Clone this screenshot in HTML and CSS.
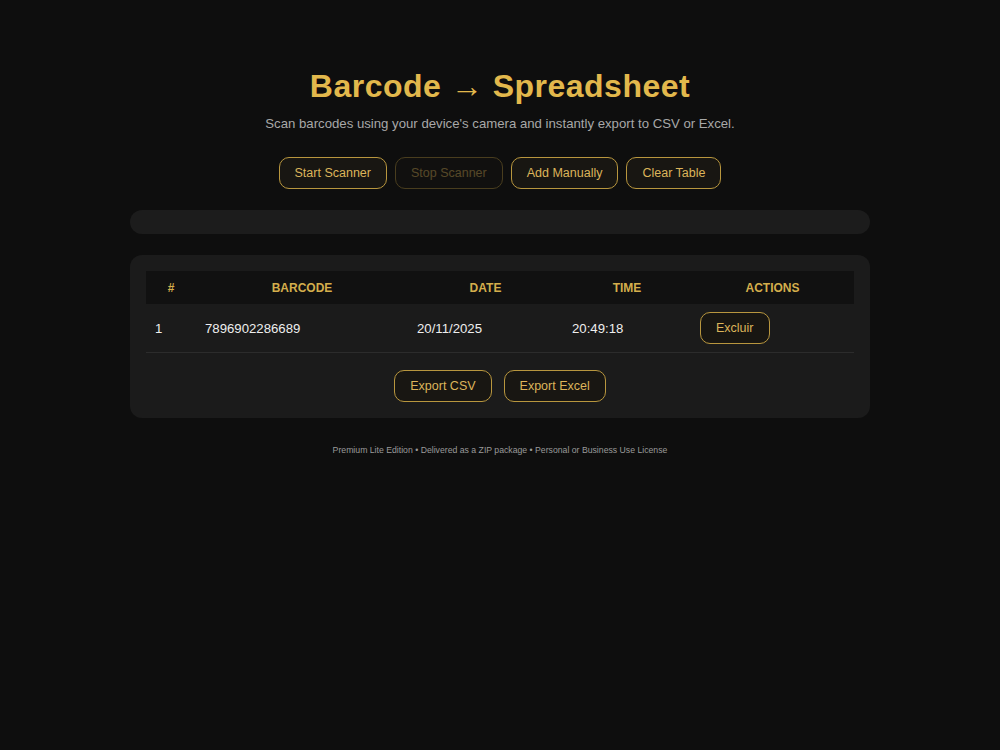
FILE: index.html
```html
<!DOCTYPE html>
<html lang="en">
<head>
    <meta charset="UTF-8">
    <meta name="viewport" content="width=device-width, initial-scale=1.0">
    <title>Barcode → Spreadsheet</title>
    <link rel="stylesheet" href="styles.css">
</head>
<body>
    <div class="wrap">
        <h1>Barcode → Spreadsheet</h1>
        <p class="subtitle">Scan barcodes using your device's camera and instantly export to CSV or Excel.</p>

        <div class="controls">
            <button class="btn">Start Scanner</button>
            <button class="btn" disabled>Stop Scanner</button>
            <button class="btn">Add Manually</button>
            <button class="btn">Clear Table</button>
        </div>

        <div id="reader" class="reader"></div>

        <div class="card">
            <table>
                <thead>
                    <tr>
                        <th class="col-num">#</th>
                        <th class="col-code">Barcode</th>
                        <th class="col-date">Date</th>
                        <th class="col-time">Time</th>
                        <th>Actions</th>
                    </tr>
                </thead>
                <tbody>
                    <tr>
                        <td>1</td>
                        <td>7896902286689</td>
                        <td>20/11/2025</td>
                        <td>20:49:18</td>
                        <td><button class="btn">Excluir</button></td>
                    </tr>
                </tbody>
            </table>

            <div class="export">
                <button class="btn">Export CSV</button>
                <button class="btn">Export Excel</button>
            </div>
        </div>

        <p class="footer">Premium Lite Edition • Delivered as a ZIP package • Personal or Business Use License</p>
    </div>
</body>
</html>
```

FILE: styles.css
```css
body {
    margin: 0;
    background-color: #0e0e0e;
    color: #eee;
    font-family: "Liberation Sans", Arial, sans-serif;
}
.wrap {
    width: 740px;
    margin: 0 auto;
    padding-top: 68px;
}
h1 {
    margin: 0;
    text-align: center;
    font-size: 32px;
    line-height: 37px;
    letter-spacing: 0.5px;
    color: #e2b84c;
}
.subtitle {
    margin: 11px 0 0;
    text-align: center;
    font-size: 13.2px;
    line-height: 16px;
    color: #a8a8a8;
}
.controls {
    display: flex;
    justify-content: center;
    gap: 8px;
    margin-top: 25px;
}
.btn {
    background-color: #181612;
    border: 1px solid #b8963e;
    border-radius: 10px;
    color: #dcb45a;
    font-family: "Liberation Sans", Arial, sans-serif;
    font-size: 12.5px;
    height: 32px;
    padding: 0 15px;
    cursor: pointer;
}
.btn:disabled {
    opacity: 0.35;
    cursor: default;
}
.reader {
    margin-top: 21px;
    height: 24px;
    border-radius: 12px;
    background-color: #1c1c1c;
}
.card {
    margin-top: 21px;
    background-color: #1b1b1b;
    border-radius: 12px;
    padding: 16px;
}
table {
    width: 100%;
    border-collapse: collapse;
}
th {
    background-color: #111;
    color: #d4ae4c;
    font-size: 12px;
    text-transform: uppercase;
    height: 33px;
    padding: 0 8px;
    text-align: center;
}
td {
    font-size: 13.2px;
    color: #eee;
    height: 48px;
    padding: 0 9px;
    border-bottom: 1px solid #2c2c2c;
}
.col-num { width: 34px; }
.col-code { width: 196px; }
.col-date { width: 139px; }
.col-time { width: 112px; }
.export {
    display: flex;
    justify-content: center;
    gap: 12px;
    margin-top: 17px;
}
.footer {
    margin: 27px 0 0;
    text-align: center;
    font-size: 8.7px;
    color: #9a9a9a;
}
```
